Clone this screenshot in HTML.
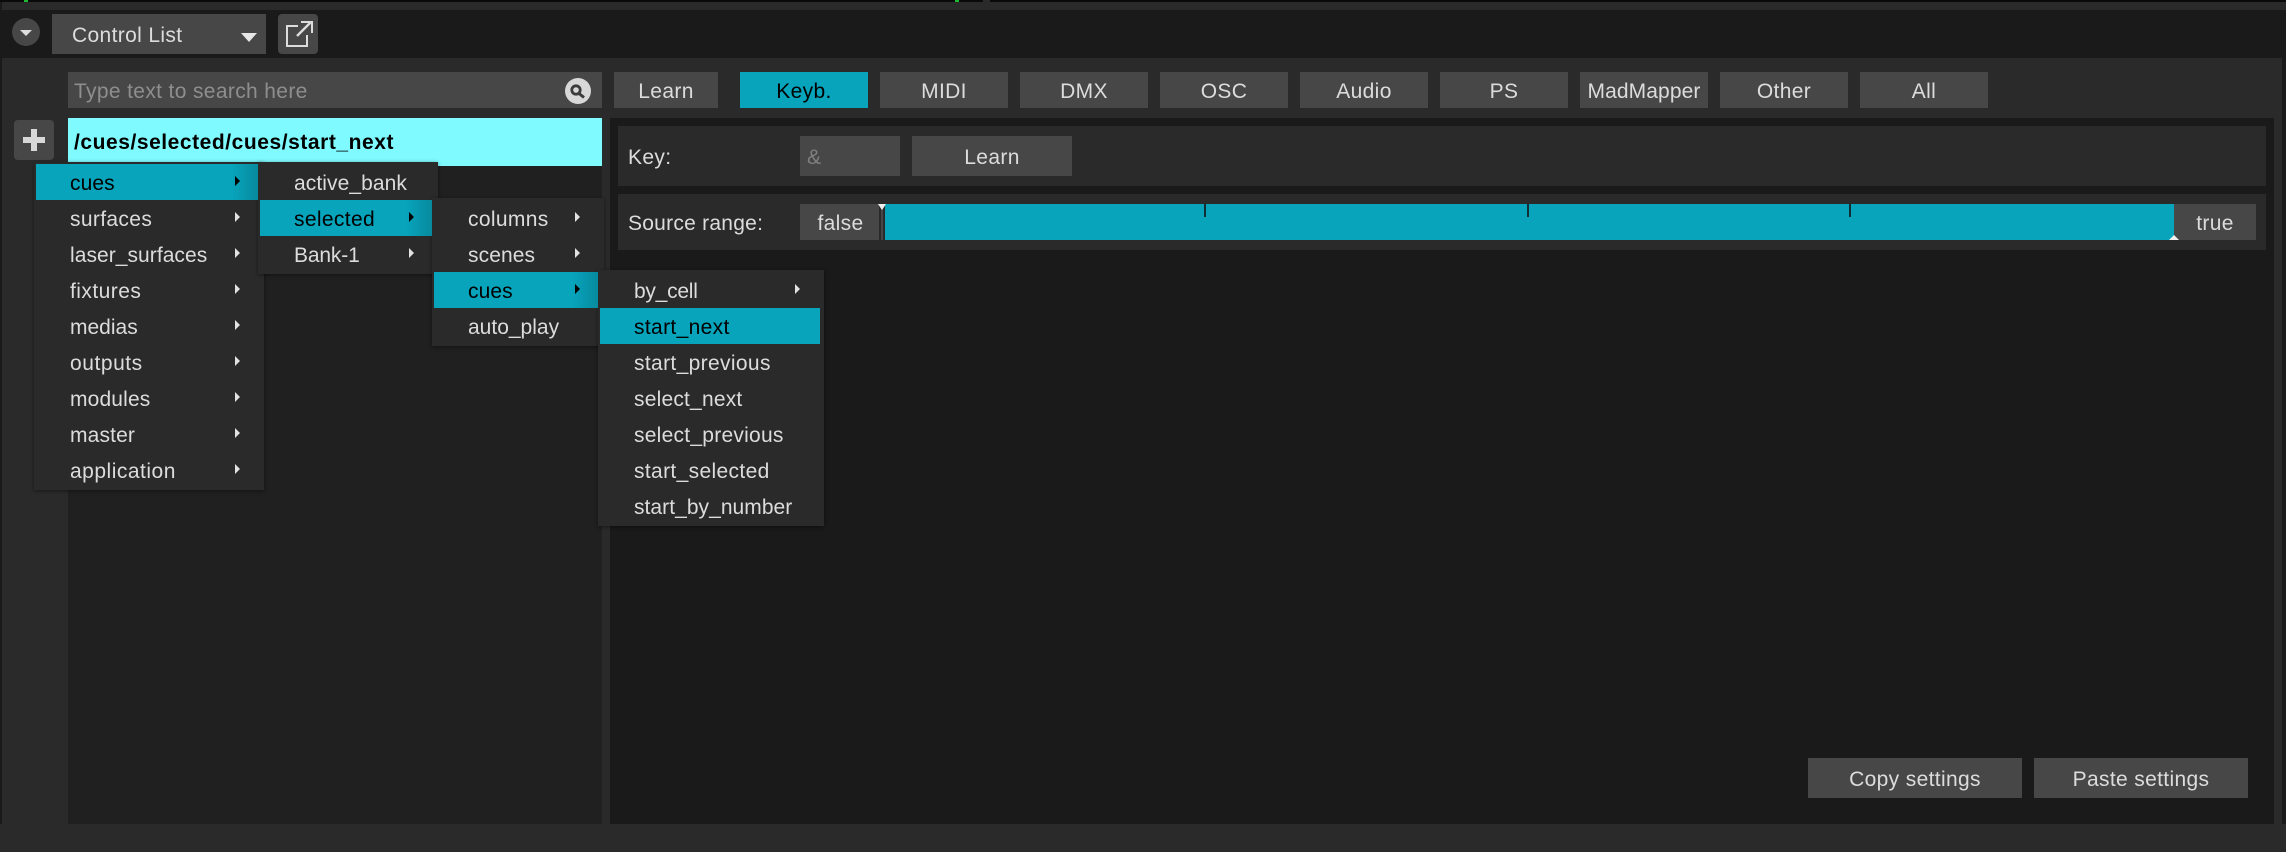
<!DOCTYPE html>
<html>
<head>
<meta charset="utf-8">
<style>
html,body{margin:0;padding:0;background:#1a1a1a;}
body{width:2286px;height:852px;position:relative;overflow:hidden;font-family:"Liberation Sans",sans-serif;font-size:21px;color:#dcdcdc;letter-spacing:.35px;}
div{position:absolute;box-sizing:border-box;white-space:nowrap;}
.b{background:#474747;display:flex;align-items:center;justify-content:center;padding-top:3px;}
.b.sm{top:72px;height:36px;width:128px;}
.m{background:#2a2a2a;box-shadow:0 1px 4px rgba(0,0,0,.45);}
.i{height:36px;line-height:39px;}
.h{background:#07a4bc;color:#000;}
.g{background:linear-gradient(to right,#07a4bc calc(100% - 26px),#078a9e);}
.a{width:0;height:0;border-left:5px solid #e2e2e2;border-top:5px solid transparent;border-bottom:5px solid transparent;}
.a.k{border-left-color:#000;}
</style>
</head>
<body>
<!-- top strip -->
<div style="left:0;top:0;width:2286px;height:2px;background:#0a0a0a"></div>
<div style="left:2px;top:2px;width:2284px;height:8px;background:#2a2a2a"></div>
<div style="left:24px;top:0;width:4px;height:2px;background:#1fb82e"></div>
<div style="left:955px;top:0;width:4px;height:2px;background:#1fb82e"></div>
<div style="left:983px;top:0;width:7px;height:2px;background:#2a2a2a"></div>

<!-- header row -->
<div style="left:12px;top:18px;width:28px;height:28px;border-radius:50%;background:#474747"></div>
<div style="left:19.5px;top:30px;width:0;height:0;border-left:6.5px solid transparent;border-right:6.5px solid transparent;border-top:6px solid #dedede"></div>
<div style="left:52px;top:14px;width:214px;height:40px;background:#474747;line-height:43px;padding-left:20px;font-size:21px">Control List</div>
<div style="left:241px;top:33px;width:0;height:0;border-left:8.5px solid transparent;border-right:8.5px solid transparent;border-top:9px solid #e6e6e6"></div>
<div style="left:278px;top:14px;width:40px;height:40px;border-radius:4px;background:#474747"></div>
<svg style="position:absolute;left:278px;top:14px" width="40" height="40" viewBox="278 14 40 40" fill="none" stroke="#dcdcdc" stroke-width="2"><path d="M298 26H287V46H307V35"/><path d="M297 36L311 22" stroke-width="2.4"/><path d="M301 22H312V33"/></svg>

<!-- main panel -->
<div style="left:0;top:58px;width:2282px;height:794px;background:#2a2a2a"></div>
<div style="left:0;top:824px;width:2286px;height:28px;background:#2a2a2a"></div>
<div style="left:0;top:58px;width:2px;height:766px;background:#1a1a1a"></div>

<!-- search -->
<div style="left:68px;top:72px;width:534px;height:36px;background:#474747;line-height:39px;padding-left:6px;color:#8e8e8e">Type text to search here</div>
<svg style="position:absolute;left:565px;top:78px" width="26" height="26" viewBox="565 78 26 26"><circle cx="578" cy="91" r="13" fill="#d8d8d8"/><circle cx="576" cy="90" r="4.2" fill="none" stroke="#3c3c3c" stroke-width="2.8"/><path d="M579 93.5L584 97.5" stroke="#3c3c3c" stroke-width="3"/></svg>

<!-- filter buttons -->
<div class="b sm" style="left:614px;width:104px">Learn</div>
<div class="b sm" style="left:740px;background:#07a4bc;color:#000">Keyb.</div>
<div class="b sm" style="left:880px">MIDI</div>
<div class="b sm" style="left:1020px">DMX</div>
<div class="b sm" style="left:1160px">OSC</div>
<div class="b sm" style="left:1300px">Audio</div>
<div class="b sm" style="left:1440px">PS</div>
<div class="b sm" style="left:1580px;letter-spacing:.1px">MadMapper</div>
<div class="b sm" style="left:1720px">Other</div>
<div class="b sm" style="left:1860px">All</div>

<!-- add button -->
<div style="left:14px;top:120px;width:40px;height:40px;border-radius:4px;background:#474747"></div>
<div style="left:23px;top:137px;width:22px;height:6px;background:#d8d8d8"></div>
<div style="left:31px;top:129px;width:6px;height:22px;background:#d8d8d8"></div>

<!-- list -->
<div style="left:68px;top:118px;width:534px;height:706px;background:#202020"></div>
<div style="left:68px;top:118px;width:534px;height:48px;background:#7ffaff;color:#000;font-weight:bold;line-height:50px;padding-left:6px;letter-spacing:.55px">/cues/selected/cues/start_next</div>

<!-- right panel -->
<div style="left:610px;top:118px;width:1664px;height:706px;background:#1a1a1a"></div>
<div style="left:618px;top:126px;width:1648px;height:60px;background:#2a2a2a"></div>
<div style="left:628px;top:126px;height:60px;line-height:63px">Key:</div>
<div style="left:800px;top:136px;width:100px;height:40px;background:#474747;line-height:43px;padding-left:7px;color:#808080">&amp;</div>
<div class="b" style="left:912px;top:136px;width:160px;height:40px">Learn</div>

<div style="left:618px;top:194px;width:1648px;height:56px;background:#2a2a2a"></div>
<div style="left:628px;top:194px;height:56px;line-height:59px;letter-spacing:.25px">Source range:</div>
<div class="b" style="left:800px;top:204px;width:79px;height:36px;padding-left:2px">false</div>
<div style="left:881px;top:204px;width:2px;height:36px;background:#474747"></div>
<div style="left:885px;top:204px;width:1289px;height:36px;background:#07a4bc"></div>
<div style="left:1204px;top:204px;width:2px;height:13px;background:#122e34"></div>
<div style="left:1527px;top:204px;width:2px;height:13px;background:#122e34"></div>
<div style="left:1849px;top:204px;width:2px;height:13px;background:#122e34"></div>
<div style="left:878px;top:204px;width:0;height:0;border-left:4.5px solid transparent;border-right:4.5px solid transparent;border-top:6px solid #f0f0f0"></div>
<div class="b" style="left:2174px;top:204px;width:82px;height:36px">true</div>
<div style="left:2169px;top:235px;width:0;height:0;border-left:5px solid transparent;border-right:5px solid transparent;border-bottom:5px solid #f0f0f0"></div>

<div class="b" style="left:1808px;top:758px;width:214px;height:40px">Copy settings</div>
<div class="b" style="left:2034px;top:758px;width:214px;height:40px">Paste settings</div>

<!-- menu 1 -->
<div class="m" style="left:34px;top:162px;width:230px;height:328px"></div>
<!-- menu 2 -->
<div class="m" style="left:258px;top:162px;width:180px;height:112px"></div>
<!-- menu 3 -->
<div class="m" style="left:432px;top:198px;width:172px;height:148px"></div>
<!-- menu 4 -->
<div class="m" style="left:598px;top:270px;width:226px;height:256px"></div>

<div class="i h g" style="left:36px;top:164px;width:222px;padding-left:34px;letter-spacing:.1px">cues</div>
<div class="i" style="left:70px;top:200px">surfaces</div>
<div class="i" style="left:70px;top:236px;letter-spacing:.05px">laser_surfaces</div>
<div class="i" style="left:70px;top:272px;letter-spacing:.45px">fixtures</div>
<div class="i" style="left:70px;top:308px;letter-spacing:0">medias</div>
<div class="i" style="left:70px;top:344px;letter-spacing:.55px">outputs</div>
<div class="i" style="left:70px;top:380px;letter-spacing:.15px">modules</div>
<div class="i" style="left:70px;top:416px;letter-spacing:.15px">master</div>
<div class="i" style="left:70px;top:452px;letter-spacing:.5px">application</div>
<div class="a k" style="left:235px;top:176px"></div>
<div class="a" style="left:235px;top:212px"></div>
<div class="a" style="left:235px;top:248px"></div>
<div class="a" style="left:235px;top:284px"></div>
<div class="a" style="left:235px;top:320px"></div>
<div class="a" style="left:235px;top:356px"></div>
<div class="a" style="left:235px;top:392px"></div>
<div class="a" style="left:235px;top:428px"></div>
<div class="a" style="left:235px;top:464px"></div>

<div class="i" style="left:294px;top:164px;letter-spacing:.08px">active_bank</div>
<div class="i h g" style="left:260px;top:200px;width:172px;padding-left:34px">selected</div>
<div class="i" style="left:294px;top:236px;letter-spacing:-.15px">Bank-1</div>
<div class="a k" style="left:409px;top:212px"></div>
<div class="a" style="left:409px;top:248px"></div>

<div class="i" style="left:468px;top:200px">columns</div>
<div class="i" style="left:468px;top:236px;letter-spacing:.1px">scenes</div>
<div class="i h g" style="left:434px;top:272px;width:164px;padding-left:34px;letter-spacing:.1px">cues</div>
<div class="i" style="left:468px;top:308px;letter-spacing:0">auto_play</div>
<div class="a" style="left:575px;top:212px"></div>
<div class="a" style="left:575px;top:248px"></div>
<div class="a k" style="left:575px;top:284px"></div>

<div class="i" style="left:634px;top:272px;letter-spacing:-.25px">by_cell</div>
<div class="i h" style="left:600px;top:308px;width:220px;padding-left:34px">start_next</div>
<div class="i" style="left:634px;top:344px">start_previous</div>
<div class="i" style="left:634px;top:380px;letter-spacing:.2px">select_next</div>
<div class="i" style="left:634px;top:416px;letter-spacing:.25px">select_previous</div>
<div class="i" style="left:634px;top:452px;letter-spacing:.35px">start_selected</div>
<div class="i" style="left:634px;top:488px;letter-spacing:.05px">start_by_number</div>
<div class="a" style="left:795px;top:284px"></div>
</body>
</html>
